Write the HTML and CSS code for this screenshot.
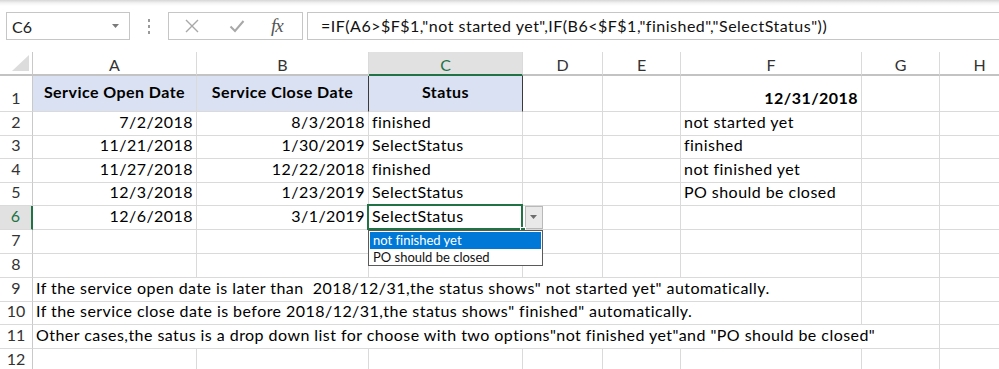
FILE: index.html
```html
<!DOCTYPE html>
<html>
<head>
<meta charset="utf-8">
<link rel="stylesheet" href="styles.css">
</head>
<body>
<div class="app">
  <div class="fbar">
    <div class="namebox">
      <span class="nb-text">C6</span>
      <svg class="nb-arrow" width="8" height="5" viewBox="0 0 8 5"><path d="M0 0 L7 0 L3.5 4 Z" fill="#7a7a7a"/></svg>
    </div>
    <div class="dots"><i></i><i></i><i></i></div>
    <div class="btns">
      <svg class="ic" width="16" height="16" viewBox="0 0 16 16"><path d="M2 2 L14 14 M14 2 L2 14" stroke="#a8a8a8" stroke-width="1.4" fill="none"/></svg>
      <svg class="ic" width="16" height="16" viewBox="0 0 16 16"><path d="M1.5 8.5 L6 13 L14.5 3" stroke="#a8a8a8" stroke-width="2" fill="none"/></svg>
      <span class="fx">fx</span>
    </div>
    <div class="formula">=IF(A6&gt;$F$1,"not started yet",IF(B6&lt;$F$1,"finished","SelectStatus"))</div>
  </div>

  <div class="sheet">
    <!-- column headers -->
    <div class="corner"><svg width="18" height="17" viewBox="0 0 18 17"><path d="M17 0 L17 16 L0 16 Z" fill="#dcdcdc"/></svg></div>
    <div class="ch">A</div>
    <div class="ch">B</div>
    <div class="ch ch-active">C</div>
    <div class="ch">D</div>
    <div class="ch">E</div>
    <div class="ch">F</div>
    <div class="ch">G</div>
    <div class="ch">H</div>

    <!-- row 1 -->
    <div class="rh">1</div>
    <div class="c hdr">Service Open Date</div>
    <div class="c hdr hdr-b">Service Close Date</div>
    <div class="c hdr hdr-c">Status</div>
    <div class="c"></div>
    <div class="c"></div>
    <div class="c r bold">12/31/2018</div>
    <div class="c"></div>
    <div class="c"></div>

    <!-- row 2 -->
    <div class="rh">2</div>
    <div class="c r">7/2/2018</div>
    <div class="c r">8/3/2018</div>
    <div class="c">finished</div>
    <div class="c"></div>
    <div class="c"></div>
    <div class="c">not started yet</div>
    <div class="c"></div>
    <div class="c"></div>

    <!-- row 3 -->
    <div class="rh">3</div>
    <div class="c r">11/21/2018</div>
    <div class="c r">1/30/2019</div>
    <div class="c">SelectStatus</div>
    <div class="c"></div>
    <div class="c"></div>
    <div class="c">finished</div>
    <div class="c"></div>
    <div class="c"></div>

    <!-- row 4 -->
    <div class="rh">4</div>
    <div class="c r">11/27/2018</div>
    <div class="c r">12/22/2018</div>
    <div class="c">finished</div>
    <div class="c"></div>
    <div class="c"></div>
    <div class="c">not finished yet</div>
    <div class="c"></div>
    <div class="c"></div>

    <!-- row 5 -->
    <div class="rh">5</div>
    <div class="c r">12/3/2018</div>
    <div class="c r">1/23/2019</div>
    <div class="c">SelectStatus</div>
    <div class="c"></div>
    <div class="c"></div>
    <div class="c">PO should be closed</div>
    <div class="c"></div>
    <div class="c"></div>

    <!-- row 6 -->
    <div class="rh rh-active">6</div>
    <div class="c r">12/6/2018</div>
    <div class="c r">3/1/2019</div>
    <div class="c active">SelectStatus
      <span class="handle"></span>
      <span class="dd-btn"><svg width="8" height="5" viewBox="0 0 8 5"><path d="M0 0 L7 0 L3.5 4 Z" fill="#6d6d6d"/></svg></span>
      <div class="dd-list">
        <div class="dd-item dd-sel">not finished yet</div>
        <div class="dd-item">PO should be closed</div>
      </div>
    </div>
    <div class="c"></div>
    <div class="c"></div>
    <div class="c"></div>
    <div class="c"></div>
    <div class="c"></div>

    <!-- row 7 -->
    <div class="rh">7</div>
    <div class="c"></div><div class="c"></div><div class="c"></div><div class="c"></div><div class="c"></div><div class="c"></div><div class="c"></div><div class="c"></div>

    <!-- row 8 -->
    <div class="rh">8</div>
    <div class="c"></div><div class="c"></div><div class="c"></div><div class="c"></div><div class="c"></div><div class="c"></div><div class="c"></div><div class="c"></div>

    <!-- row 9 -->
    <div class="rh">9</div>
    <div class="c span6">If the service open date is later than&nbsp; 2018/12/31,the status shows" not started yet" automatically.</div>
    <div class="c"></div><div class="c"></div>

    <!-- row 10 -->
    <div class="rh">10</div>
    <div class="c span6">If the service close date is before 2018/12/31,the status shows" finished" automatically.</div>
    <div class="c"></div><div class="c"></div>

    <!-- row 11 -->
    <div class="rh">11</div>
    <div class="c span7">Other cases,the satus is a drop down list for choose with two options"not finished yet"and "PO should be closed"</div>
    <div class="c"></div>

    <!-- row 12 -->
    <div class="rh">12</div>
    <div class="c"></div><div class="c"></div><div class="c"></div><div class="c"></div><div class="c"></div><div class="c"></div><div class="c"></div><div class="c"></div>
  </div>
</div>
</body>
</html>
```

FILE: styles.css
```css
* { box-sizing: border-box; }

html, body {
  margin: 0;
  padding: 0;
  background: #ffffff;
  width: 999px;
  height: 369px;
  overflow: hidden;
}

.app {
  font-family: Lato, "Open Sans", sans-serif;
  font-variant-ligatures: none;
  color: #000;
  background: linear-gradient(#d6d6d6 0, #f3f3f3 3px, #ffffff 6px, #ffffff 100%);
  height: 369px;
}

/* formula bar */
.fbar {
  display: flex;
  align-items: stretch;
  height: 52px;
  padding: 12px 0 12px 6px;
}

.namebox {
  width: 124px;
  height: 28px;
  border: 1px solid #c6c6c6;
  background: #fff;
  display: flex;
  align-items: center;
  justify-content: space-between;
  padding: 0 9px 0 5px;
  font-size: 16px;
  color: #222;
}

.nb-arrow { margin-top: 1px; }

.dots {
  width: 38px;
  display: flex;
  flex-direction: column;
  align-items: center;
  justify-content: center;
  gap: 3px;
}
.dots i {
  width: 2px;
  height: 3px;
  background: #9a9a9a;
  display: block;
}

.btns {
  width: 135px;
  height: 28px;
  border: 1px solid #c6c6c6;
  background: #fff;
  display: flex;
  align-items: center;
  padding: 0 0 0 15px;
}
.btns .ic { margin-right: 29px; }
.btns .ic + .ic { margin-right: 26px; }

.fx {
  font-family: "Liberation Serif", serif;
  font-style: italic;
  font-size: 19px;
  color: #555;
  letter-spacing: -1px;
}

.formula {
  flex: 1;
  margin-left: 4px;
  margin-right: -4px;
  height: 28px;
  border: 1px solid #c6c6c6;
  background: #fff;
  padding: 0 0 0 13px;
  font-size: 16px;
  letter-spacing: 0.5px;
  line-height: 26px;
  white-space: nowrap;
  color: #111;
}

/* sheet grid */
.sheet {
  display: grid;
  grid-template-columns: 33px 164px 172px 154px 80px 78px 181px 78px 80px;
  grid-template-rows: 24px 36px 24px 23px 24px 23px 24px 24px 24px 24px 23px 24px 24px;
  font-size: 16px;
}

.corner {
  border-right: 1px solid #c9c9c9;
  border-bottom: 2px solid #c3c3c3;
  display: flex;
  align-items: flex-end;
  justify-content: flex-end;
  padding: 0 2px 2px 0;
  background: #fff;
}

.ch {
  border-right: 1px solid #dadada;
  border-bottom: 2px solid #c3c3c3;
  display: flex;
  align-items: center;
  justify-content: center;
  color: #333;
  background: #fff;
  padding-top: 2px;
}
.ch-active {
  background: #e1e1e1;
  color: #217346;
  border-bottom-color: #217346;
}

.rh {
  border-right: 1px solid #c9c9c9;
  border-bottom: 1px solid #dadada;
  display: flex;
  align-items: flex-end;
  justify-content: center;
  padding-bottom: 4px;
  color: #333;
  background: #fff;
}
.rh-active {
  background: #e1e1e1;
  color: #217346;
  border-right: 2px solid #217346;
}

.c {
  border-right: 1px solid #dadada;
  border-bottom: 1px solid #dadada;
  display: flex;
  align-items: flex-end;
  padding: 0 3px 4px 3px;
  white-space: nowrap;
  position: relative;
  letter-spacing: 0.45px;
}
.c.r { justify-content: flex-end; padding-right: 3px; }
.bold { font-weight: 700; }

.hdr {
  background: #d9e1f2;
  font-weight: 700;
  justify-content: center;
  align-items: center;
  padding: 0 0 4px 0;
}
.hdr-b { border-right-color: #3a3a3a; }
.hdr-c { border-right-color: #3a3a3a; }

.span6 { grid-column: span 6; }
.span7 { grid-column: span 7; }

/* active cell */
.active::after {
  content: "";
  position: absolute;
  left: -2px;
  top: -2px;
  right: -1px;
  bottom: -1px;
  border: 2px solid #217346;
  pointer-events: none;
}
.handle {
  position: absolute;
  right: -4px;
  bottom: -4px;
  width: 6px;
  height: 6px;
  background: #217346;
  border: 1px solid #fff;
  z-index: 3;
}

.dd-btn {
  position: absolute;
  left: 156px;
  top: 0;
  width: 18px;
  height: 23px;
  background: #e9e9e9;
  border: 1px solid #b9b9b9;
  display: flex;
  align-items: center;
  justify-content: center;
  z-index: 2;
}

.dd-list {
  position: absolute;
  left: -1px;
  top: 24px;
  width: 175px;
  height: 36px;
  background: #fff;
  border: 1px solid #5a5a5a;
  padding: 1px 1px;
  z-index: 4;
  font-size: 13px;
  letter-spacing: 0;
}
.dd-item {
  height: 17px;
  line-height: 17px;
  padding-left: 3px;
  color: #111;
}
.dd-sel {
  background: #0078d7;
  color: #fff;
}
```
